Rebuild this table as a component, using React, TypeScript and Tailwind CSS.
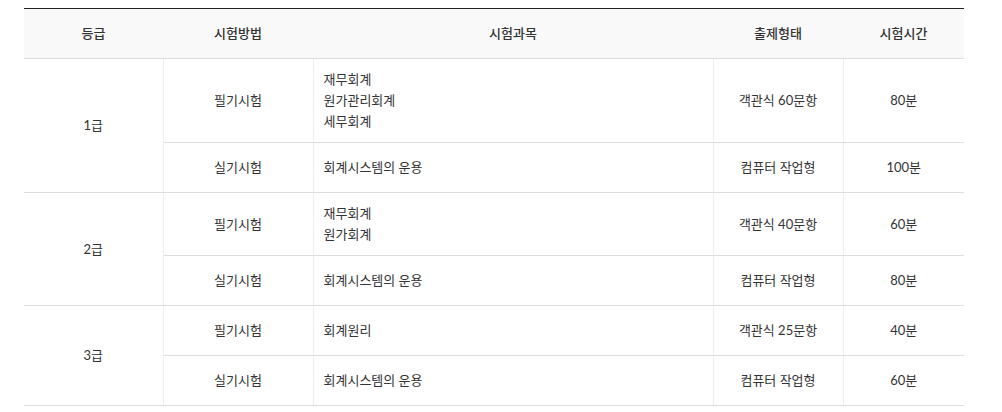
import React from "react";

type Sub = { method: string; subjects: string[]; type: string; time: string };
type Grade = { grade: string; rows: Sub[] };

const data: Grade[] = [
  {
    grade: "1급",
    rows: [
      { method: "필기시험", subjects: ["재무회계", "원가관리회계", "세무회계"], type: "객관식 60문항", time: "80분" },
      { method: "실기시험", subjects: ["회계시스템의 운용"], type: "컴퓨터 작업형", time: "100분" },
    ],
  },
  {
    grade: "2급",
    rows: [
      { method: "필기시험", subjects: ["재무회계", "원가회계"], type: "객관식 40문항", time: "60분" },
      { method: "실기시험", subjects: ["회계시스템의 운용"], type: "컴퓨터 작업형", time: "80분" },
    ],
  },
  {
    grade: "3급",
    rows: [
      { method: "필기시험", subjects: ["회계원리"], type: "객관식 25문항", time: "40분" },
      { method: "실기시험", subjects: ["회계시스템의 운용"], type: "컴퓨터 작업형", time: "60분" },
    ],
  },
];

const cell = "h-[50px] px-[10px] py-[10px] leading-[21px] align-middle border-b border-b-[#dddddd]";

export default function App() {
  return (
    <div
      className="bg-white w-[1002px] h-[412px] pt-[8px] pl-[24px] text-[13px] text-[#333333]"
      style={{ fontFamily: 'Lato, "Noto Sans CJK KR", sans-serif' }}
    >
      <table className="w-[940px] border-collapse table-fixed border-t border-t-[#222222]">
        <colgroup>
          <col className="w-[139px]" />
          <col className="w-[150px]" />
          <col className="w-[400px]" />
          <col className="w-[130px]" />
          <col className="w-[121px]" />
        </colgroup>
        <thead>
          <tr className="bg-[#f9f9f9]">
            {["등급", "시험방법", "시험과목", "출제형태", "시험시간"].map((h) => (
              <th key={h} className="h-[50px] font-medium text-center align-middle border-b border-b-[#dddddd] text-[#333333]">
                {h}
              </th>
            ))}
          </tr>
        </thead>
        <tbody>
          {data.map((g) =>
            g.rows.map((r, i) => (
              <tr key={g.grade + i}>
                {i === 0 && (
                  <td rowSpan={g.rows.length} className={`${cell} text-center border-r border-r-[#eeeeee]`}>
                    {g.grade}
                  </td>
                )}
                <td className={`${cell} text-center border-r border-r-[#eeeeee]`}>{r.method}</td>
                <td className={`${cell} text-left border-r border-r-[#eeeeee]`}>
                  {r.subjects.map((s) => (
                    <div key={s}>{s}</div>
                  ))}
                </td>
                <td className={`${cell} text-center border-r border-r-[#eeeeee]`}>{r.type}</td>
                <td className={`${cell} text-center`}>{r.time}</td>
              </tr>
            ))
          )}
        </tbody>
      </table>
    </div>
  );
}
